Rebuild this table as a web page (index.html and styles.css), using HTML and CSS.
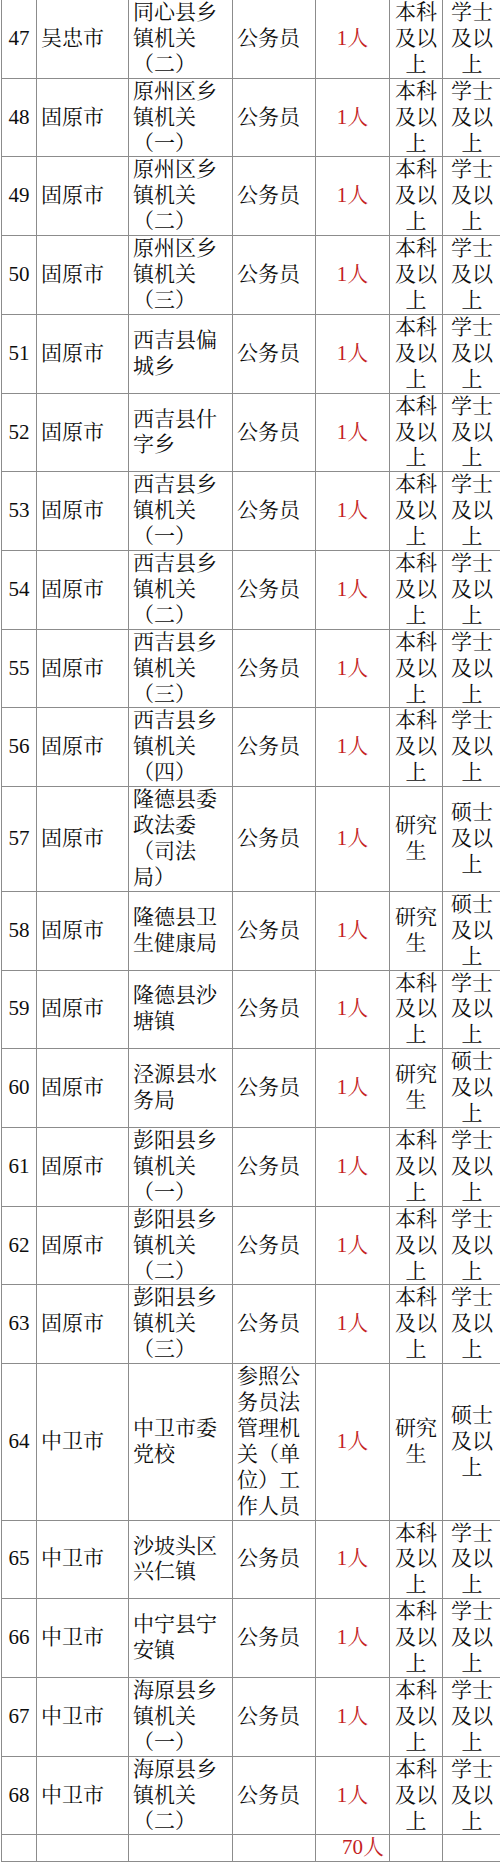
FILE: index.html
```html
<!DOCTYPE html>
<html lang="zh-CN">
<head>
<meta charset="utf-8">
<title>招录岗位表</title>
<link rel="stylesheet" href="styles.css">
</head>
<body>
<table class="posts">
  <colgroup>
    <col class="c-no">
    <col class="c-city">
    <col class="c-unit">
    <col class="c-type">
    <col class="c-num">
    <col class="c-edu">
    <col class="c-deg">
  </colgroup>
  <tbody>
    <tr><td class="no">47</td><td class="txt">吴忠市</td><td class="txt">同心县乡镇机关（二）</td><td class="txt">公务员</td><td class="num">1人</td><td class="mid">本科及以上</td><td class="mid">学士及以上</td></tr>
    <tr><td class="no">48</td><td class="txt">固原市</td><td class="txt">原州区乡镇机关（一）</td><td class="txt">公务员</td><td class="num">1人</td><td class="mid">本科及以上</td><td class="mid">学士及以上</td></tr>
    <tr><td class="no">49</td><td class="txt">固原市</td><td class="txt">原州区乡镇机关（二）</td><td class="txt">公务员</td><td class="num">1人</td><td class="mid">本科及以上</td><td class="mid">学士及以上</td></tr>
    <tr><td class="no">50</td><td class="txt">固原市</td><td class="txt">原州区乡镇机关（三）</td><td class="txt">公务员</td><td class="num">1人</td><td class="mid">本科及以上</td><td class="mid">学士及以上</td></tr>
    <tr><td class="no">51</td><td class="txt">固原市</td><td class="txt">西吉县偏城乡</td><td class="txt">公务员</td><td class="num">1人</td><td class="mid">本科及以上</td><td class="mid">学士及以上</td></tr>
    <tr><td class="no">52</td><td class="txt">固原市</td><td class="txt">西吉县什字乡</td><td class="txt">公务员</td><td class="num">1人</td><td class="mid">本科及以上</td><td class="mid">学士及以上</td></tr>
    <tr><td class="no">53</td><td class="txt">固原市</td><td class="txt">西吉县乡镇机关（一）</td><td class="txt">公务员</td><td class="num">1人</td><td class="mid">本科及以上</td><td class="mid">学士及以上</td></tr>
    <tr><td class="no">54</td><td class="txt">固原市</td><td class="txt">西吉县乡镇机关（二）</td><td class="txt">公务员</td><td class="num">1人</td><td class="mid">本科及以上</td><td class="mid">学士及以上</td></tr>
    <tr><td class="no">55</td><td class="txt">固原市</td><td class="txt">西吉县乡镇机关（三）</td><td class="txt">公务员</td><td class="num">1人</td><td class="mid">本科及以上</td><td class="mid">学士及以上</td></tr>
    <tr><td class="no">56</td><td class="txt">固原市</td><td class="txt">西吉县乡镇机关（四）</td><td class="txt">公务员</td><td class="num">1人</td><td class="mid">本科及以上</td><td class="mid">学士及以上</td></tr>
    <tr><td class="no">57</td><td class="txt">固原市</td><td class="txt">隆德县委政法委（司法局）</td><td class="txt">公务员</td><td class="num">1人</td><td class="mid">研究生</td><td class="mid">硕士及以上</td></tr>
    <tr><td class="no">58</td><td class="txt">固原市</td><td class="txt">隆德县卫生健康局</td><td class="txt">公务员</td><td class="num">1人</td><td class="mid">研究生</td><td class="mid">硕士及以上</td></tr>
    <tr><td class="no">59</td><td class="txt">固原市</td><td class="txt">隆德县沙塘镇</td><td class="txt">公务员</td><td class="num">1人</td><td class="mid">本科及以上</td><td class="mid">学士及以上</td></tr>
    <tr><td class="no">60</td><td class="txt">固原市</td><td class="txt">泾源县水务局</td><td class="txt">公务员</td><td class="num">1人</td><td class="mid">研究生</td><td class="mid">硕士及以上</td></tr>
    <tr><td class="no">61</td><td class="txt">固原市</td><td class="txt">彭阳县乡镇机关（一）</td><td class="txt">公务员</td><td class="num">1人</td><td class="mid">本科及以上</td><td class="mid">学士及以上</td></tr>
    <tr><td class="no">62</td><td class="txt">固原市</td><td class="txt">彭阳县乡镇机关（二）</td><td class="txt">公务员</td><td class="num">1人</td><td class="mid">本科及以上</td><td class="mid">学士及以上</td></tr>
    <tr><td class="no">63</td><td class="txt">固原市</td><td class="txt">彭阳县乡镇机关（三）</td><td class="txt">公务员</td><td class="num">1人</td><td class="mid">本科及以上</td><td class="mid">学士及以上</td></tr>
    <tr><td class="no">64</td><td class="txt">中卫市</td><td class="txt">中卫市委党校</td><td class="txt">参照公务员法管理机关（单位）工作人员</td><td class="num">1人</td><td class="mid">研究生</td><td class="mid">硕士及以上</td></tr>
    <tr><td class="no">65</td><td class="txt">中卫市</td><td class="txt">沙坡头区兴仁镇</td><td class="txt">公务员</td><td class="num">1人</td><td class="mid">本科及以上</td><td class="mid">学士及以上</td></tr>
    <tr><td class="no">66</td><td class="txt">中卫市</td><td class="txt">中宁县宁安镇</td><td class="txt">公务员</td><td class="num">1人</td><td class="mid">本科及以上</td><td class="mid">学士及以上</td></tr>
    <tr><td class="no">67</td><td class="txt">中卫市</td><td class="txt">海原县乡镇机关（一）</td><td class="txt">公务员</td><td class="num">1人</td><td class="mid">本科及以上</td><td class="mid">学士及以上</td></tr>
    <tr><td class="no">68</td><td class="txt">中卫市</td><td class="txt">海原县乡镇机关（二）</td><td class="txt">公务员</td><td class="num">1人</td><td class="mid">本科及以上</td><td class="mid">学士及以上</td></tr>
    <tr class="total"><td></td><td></td><td></td><td></td><td class="num sum">70人</td><td></td><td></td></tr>
  </tbody>
</table>
</body>
</html>
```

FILE: styles.css
```css
html, body {
  margin: 0;
  padding: 0;
  background: #ffffff;
  overflow-x: hidden;
}

body {
  font-family: "Liberation Serif", "Noto Serif CJK SC", "Noto Sans CJK SC", serif;
  font-size: 21px;
  color: #0d0d0d;
  text-spacing-trim: space-all;
}

.posts {
  border-collapse: collapse;
  table-layout: fixed;
  width: 500px;
  margin: -1px 0 0 1px;
}

.c-no   { width: 35px; }
.c-city { width: 92px; }
.c-unit { width: 104px; }
.c-type { width: 83px; }
.c-num  { width: 74px; }
.c-edu  { width: 53px; }
.c-deg  { width: 59px; }

.posts td {
  border: 1px solid #8c8c8c;
  padding: 0 4px;
  line-height: 25.9px;
  vertical-align: middle;
  text-spacing-trim: space-all;
}

.posts td.no {
  text-align: center;
  padding: 0;
}

.posts td.txt {
  text-align: left;
  padding-left: 4px;
}

.posts td.num {
  text-align: center;
  color: #c41e24;
}

.posts td.mid {
  text-align: center;
}

.posts td.sum {
  text-align: right;
  padding-right: 5px;
}

.total td {
  height: 24px;
}
```
